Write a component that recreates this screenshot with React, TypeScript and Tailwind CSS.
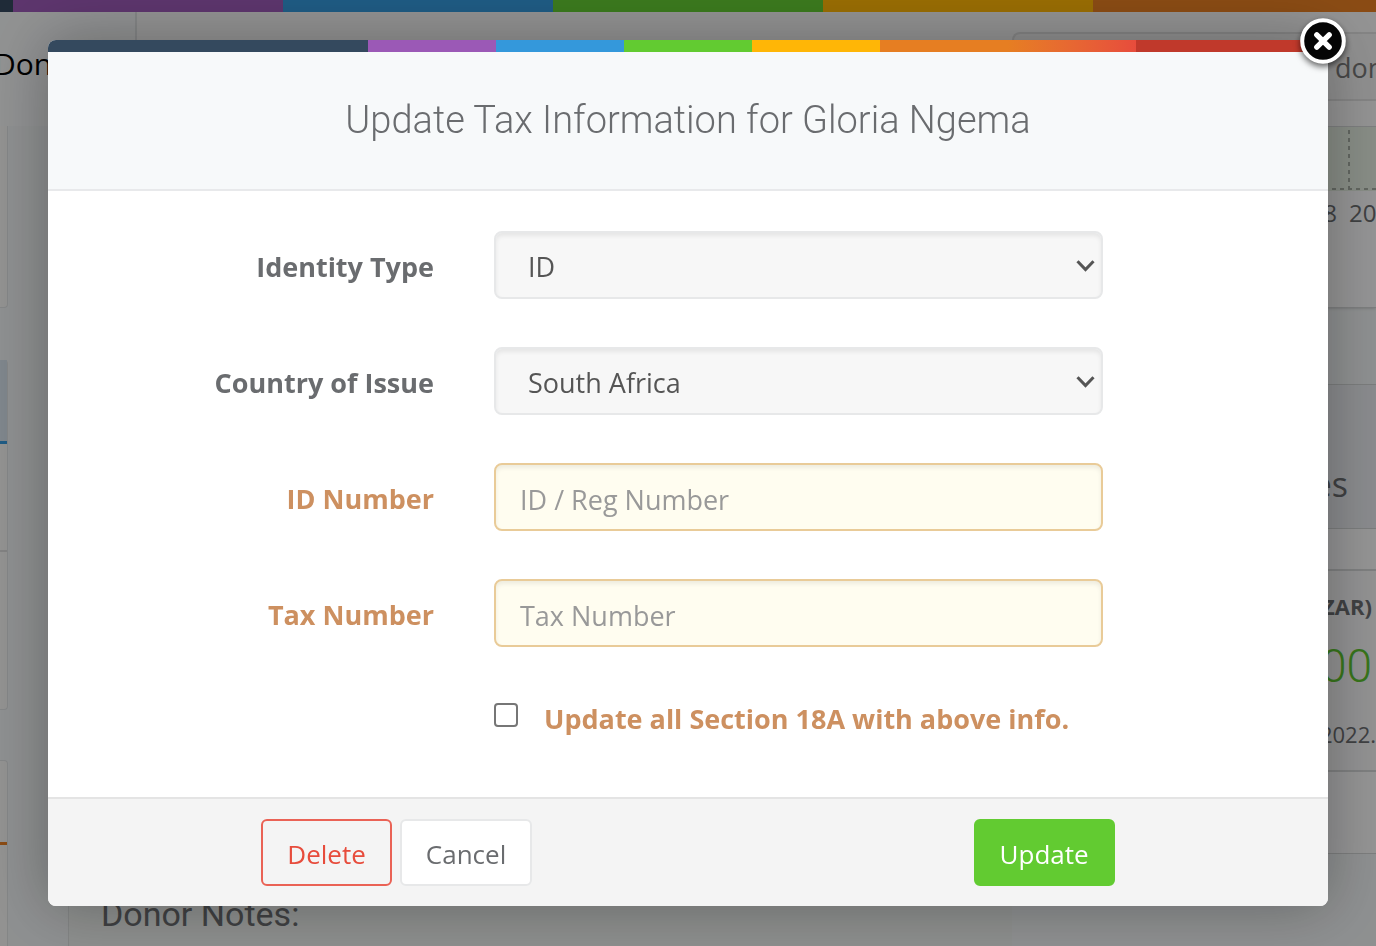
import { useState } from "react"

const pageStripes = ["bg-[#9b59b6]", "bg-[#3498db]", "bg-[#63cb32]", "bg-[#ffb606]", "bg-[#e67e22]"]

const fieldClass = "w-full h-[68px] rounded-lg border-2 pt-1 text-[27px] shadow-[inset_0_3px_4px_rgba(0,0,0,0.07)] focus:outline-none"

function PageStripe() {
  return (
    <div className="flex h-3 overflow-hidden">
      <div className="w-[13px] shrink-0 bg-[#34495e]" />
      {pageStripes.map((color) => <div key={color} className={`w-[270px] shrink-0 last:flex-1 ${color}`} />)}
    </div>
  )
}

function ModalStripe() {
  return (
    <div className="flex h-3 overflow-hidden rounded-t-lg">
      <div className="w-1/4 bg-[#34495e]" />
      <div className="w-1/10 bg-[#9b59b6]" />
      <div className="w-1/10 bg-[#3498db]" />
      <div className="w-1/10 bg-[#62cb31]" />
      <div className="w-1/10 bg-[#ffb606]" />
      <div className="w-1/10 bg-[#e67e22]" />
      <div className="w-1/10 bg-linear-to-r from-[#e67e22] to-[#e74c3c]" />
      <div className="flex-1 bg-[#c0392b]" />
    </div>
  )
}

function LeftCards() {
  return (
    <aside className="w-2 shrink-0 flex flex-col">
      <div className="h-[182px] rounded-br border-r border-b border-[#dcdfe0] bg-[#f4f4f2]" />
      <div className="mt-[52px] h-[350px] rounded-r border-r border-b border-[#dcdfe0] bg-[#f4f4f2]">
        <div className="h-[84px] border-b-3 border-[#3498db] bg-[#d3dfe9]" />
        <div className="h-[108px] border-b-2 border-[#d8d8d8]" />
      </div>
      <div className="mt-[50px] flex-1 rounded-tr border-r border-t border-[#dcdfe0] bg-[#f4f4f2]">
        <div className="h-[84px] border-b-3 border-[#e67e22]" />
      </div>
    </aside>
  )
}

function RightColumn() {
  return (
    <div className="w-[364px] shrink-0 flex flex-col overflow-hidden text-right text-[#6a6c6f]">
      <div className="h-[182px] border-y border-[#d0d2d3] bg-[#f7f7f8] shadow-sm">
        <svg className="block w-full h-[64px]">
          <rect width="100%" height="64" fill="#e2ebdf" />
          <path d="M337 3V63M0 62H364" stroke="#a3aaa0" strokeWidth="2" strokeDasharray="4 4" fill="none" />
        </svg>
        <div className="flex justify-end gap-3 text-2xl leading-11 whitespace-nowrap">
          <span>2018</span>
          <span className="w-[27px] text-left">2019</span>
        </div>
      </div>
      <div className="mt-[76px] h-[145px] border-y border-[#cdd0d0] bg-[#e6e8ec] pt-[77px] pr-7">
        <h3 className="text-[34px] leading-11">Statuses</h3>
      </div>
      <div className="h-[325px] border-b border-[#cfd1d1] bg-[#f6f6f7] pt-10">
        <div className="h-[203px] border-y-2 border-[#d2d4d5] bg-[#f3f3f4] pt-[13px]">
          <div className="pr-1 text-[22px] leading-11 font-bold">Total (ZAR)</div>
          <div className="pr-1 text-[46px] leading-[76px] font-light font-[Roboto] text-[#5cc22e]">1 200.00</div>
          <div className="text-[22px] leading-[60px]">June 2022.</div>
        </div>
      </div>
    </div>
  )
}

function DonorPage() {
  return (
    <div className="h-screen overflow-hidden flex flex-col bg-[#edf0f1]">
      <PageStripe />
      <header className="h-[114px] shrink-0 flex justify-between">
        <div className="w-[137px] border-r-2 border-[#dcdfe0] bg-[#f1f3f4] pt-7 text-[30px] leading-12 text-black">
          <span className="-ml-1.5">Donors</span>
        </div>
        <div className="flex-1 bg-[#f5f5f5] pt-5">
          <div className="ml-auto w-[364px] h-[69px] rounded-tl-lg border-2 border-r-0 border-[#dcdcdc] bg-[#efefef] pl-[321px] text-[27px] leading-[68px] text-[#777]">donor</div>
        </div>
      </header>
      <div className="flex flex-1 min-h-0">
        <LeftCards />
        <main className="flex-1 ml-[60px] border-l border-[#d9dcdc] flex flex-col justify-end pl-8 pb-2 bg-[#ebeeec]">
          <h2 className="text-[34px] leading-12 text-[#6a6c6f] font-[Roboto]">Donor Notes:</h2>
        </main>
        <RightColumn />
      </div>
    </div>
  )
}

function Row({ id, label, warn, children }: { id: string; label: string; warn?: boolean; children: React.ReactNode }) {
  return (
    <div className="grid grid-cols-[386fr_609fr_165fr] gap-x-[60px] items-center">
      <label htmlFor={id} className={`pt-1 text-right text-[27px] font-bold ${warn ? "text-[#cd9060]" : "text-[#6a6c6f]"}`}>{label}</label>
      {children}
    </div>
  )
}

function Select({ id, options }: { id: string; options: string[] }) {
  return (
    <div className="relative">
      <select id={id} className={`${fieldClass} appearance-none border-[#e7e8e9] bg-[#f7f7f7] pl-8 pr-12 text-[#555]`}>
        {options.map((o) => <option key={o}>{o}</option>)}
      </select>
      <svg className="absolute right-2 top-7 pointer-events-none" width="19" height="14" viewBox="0 0 19 14" fill="none" stroke="#555" strokeWidth="3">
        <path d="M1.5 2.2L9.5 10.6L17.5 2.2" />
      </svg>
    </div>
  )
}

function CloseIcon() {
  return (
    <svg width="60" height="60" viewBox="0 0 60 60" className="drop-shadow-[0_3px_3px_rgba(0,0,0,0.6)]">
      <circle cx="30" cy="30" r="20.8" fill="#050505" stroke="#fff" strokeWidth="4" />
      <path d="M23.8 23.8L36.2 36.2M36.2 23.8L23.8 36.2" stroke="#fff" strokeWidth="5.4" strokeLinecap="round" />
    </svg>
  )
}

export default function App() {
  const [idNumber, setIdNumber] = useState("")
  const [taxNumber, setTaxNumber] = useState("")
  const [updateAll, setUpdateAll] = useState(false)
  const warnField = `${fieldClass} border-[#e9cb98] bg-[#fffdf0] px-6 text-[#555] placeholder:text-[#999]`
  return (
    <div className="font-['Open_Sans',sans-serif]">
      <DonorPage />
      <div className="fixed inset-0 bg-black/40 px-12 pt-10">
        <div role="dialog" aria-labelledby="title" className="relative rounded-lg bg-white shadow-[0_0_60px_rgba(0,0,0,0.3)]">
          <ModalStripe />
          <button type="button" aria-label="Close" className="absolute -top-[29px] -right-[25px] cursor-pointer">
            <CloseIcon />
          </button>
          <div className="border-b-2 border-[#e8e9eb] bg-[#f7f9fa] py-10 text-center">
            <h1 id="title" className="text-[38px] leading-[57px] font-light text-[#6a6c6f] font-[Roboto]">Update Tax Information for Gloria Ngema</h1>
          </div>
          <form onSubmit={(e) => e.preventDefault()}>
            <div className="flex flex-col gap-12 pt-10 pb-[58px]">
              <Row id="idType" label="Identity Type">
                <Select id="idType" options={["ID", "Passport"]} />
              </Row>
              <Row id="country" label="Country of Issue">
                <Select id="country" options={["South Africa", "Namibia"]} />
              </Row>
              <Row id="idNumber" label="ID Number" warn>
                <input id="idNumber" value={idNumber} onChange={(e) => setIdNumber(e.target.value)} placeholder="ID / Reg Number" className={warnField} />
              </Row>
              <Row id="taxNumber" label="Tax Number" warn>
                <input id="taxNumber" value={taxNumber} onChange={(e) => setTaxNumber(e.target.value)} placeholder="Tax Number" className={warnField} />
              </Row>
              <div className="grid grid-cols-[386fr_609fr_165fr] gap-x-[60px]">
                <div className="col-start-2 flex items-start gap-[26px] pt-1">
                  <input id="updateAll" type="checkbox" checked={updateAll} onChange={(e) => setUpdateAll(e.target.checked)}
                    className="mt-1 size-6 shrink-0 appearance-none rounded border-2 border-[#767676] bg-white checked:bg-[#3498db]" />
                  <label htmlFor="updateAll" className="whitespace-nowrap text-[27px] leading-10 font-bold text-[#cd9060]">Update all Section 18A with above info.</label>
                </div>
              </div>
            </div>
            <div className="rounded-b-lg border-t-2 border-[#e4e4e4] bg-[#f4f4f4] py-5">
              <div className="mx-auto w-2/3 flex gap-2 text-[26px]">
                <button type="button" className="h-[67px] px-6 pt-1 rounded-md border-2 border-[#ea6255] text-[#e74c3c]">Delete</button>
                <button type="button" className="h-[67px] px-6 pt-1 rounded-md border-2 border-[#e7e8e9] bg-white text-[#6a6c6f]">Cancel</button>
                <button type="submit" className="ml-auto h-[67px] px-6 pt-1 rounded-md border-2 border-[#62cb31] bg-[#62cb31] text-white">Update</button>
              </div>
            </div>
          </form>
        </div>
      </div>
    </div>
  )
}
